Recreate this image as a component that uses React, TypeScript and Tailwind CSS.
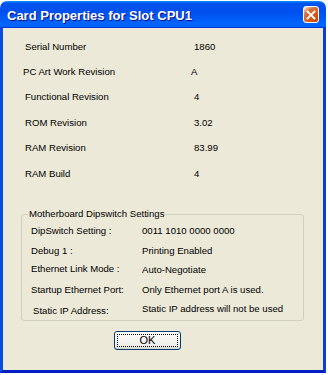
import React from "react";

const topRows = [
  { label: "Serial Number", value: "1860", lc: "ml-[22px] w-[169px]" },
  { label: "PC Art Work Revision", value: "A", lc: "ml-[20px] w-[168px]" },
  { label: "Functional Revision", value: "4", lc: "ml-[22px] w-[169px]" },
  { label: "ROM Revision", value: "3.02", lc: "ml-[22px] w-[169px]" },
  { label: "RAM Revision", value: "83.99", lc: "ml-[22px] w-[169px]" },
  { label: "RAM Build", value: "4", lc: "ml-[22px] w-[169px]" },
];

const groupRows = [
  { label: "DipSwitch Setting :", value: "0011 1010 0000 0000", lc: "ml-[9px] w-[111px]", ls: "" },
  { label: "Debug 1 :", value: "Printing Enabled", lc: "ml-[9px] w-[111px]", ls: "" },
  { label: "Ethernet Link Mode :", value: "Auto-Negotiate", lc: "ml-[9px] w-[111px]", ls: "-mt-[2px]" },
  { label: "Startup Ethernet Port:", value: "Only Ethernet port A is used.", lc: "ml-[9px] w-[111px]", ls: "" },
  { label: "Static IP Address:", value: "Static IP address will not be used", lc: "ml-[11px] w-[109px]", ls: "mt-[3px]" },
];

export default function App() {
  return (
    <div className="w-[328px] h-[375px] bg-white pt-[1px] font-['Liberation_Sans',Arial,sans-serif] text-black">
      <div className="w-[326px] h-[372px] flex flex-col rounded-t-[7px] overflow-hidden">
        {/* Title bar */}
        <div className="h-[27px] shrink-0 flex items-start justify-between bg-[linear-gradient(180deg,#0997ff,#0053ee_8%,#0050ee_40%,#0066ff_88%,#0066ff_93%,#005bff_95%,#003dd7_96%,#003dd7)]">
          <div className="pl-[7px] pt-[6px] text-[13px] leading-[17px] font-bold text-white [text-shadow:1px_1px_#0f1089]">
            Card Properties for Slot CPU1
          </div>
          <div className="mt-[5px] mr-[7px] w-[16px] h-[17px] rounded-[3px] border border-white bg-[radial-gradient(circle_at_90%_90%,#cc4600_0,#dc6527_55%,#cd7546_70%,#ffccb2_90%,#fff_100%)] flex items-center justify-center">
            <svg width="10" height="10" viewBox="0 0 10 10">
              <path d="M1.5 1.5 L8.5 8.5 M8.5 1.5 L1.5 8.5" stroke="white" strokeWidth="1.8" strokeLinecap="square" />
            </svg>
          </div>
        </div>
        {/* Body */}
        <div className="flex-1 flex flex-col bg-[#ece9d8] border-l-[3px] border-r-[3px] border-b-[3px] border-l-[#0a4be0] border-r-[#0a3ed6] border-b-[#001fc4] text-[9.6px] leading-[12px]">
          <div className="pt-[6px] flex flex-col">
            {topRows.map((r) => (
              <div key={r.label} className="h-[25.4px] flex items-center">
                <span className={r.lc}>{r.label}</span>
                <span>{r.value}</span>
              </div>
            ))}
          </div>
          <div className="relative mt-[28px] ml-[18px] w-[283px] h-[107px] border border-[#d0d0bf] rounded-[3px] pt-[6px] flex flex-col">
            <span className="absolute left-[6px] -top-[7px] px-[1px] bg-[#ece9d8]">Motherboard Dipswitch Settings</span>
            {groupRows.map((r) => (
              <div key={r.label} className="h-[19.5px] flex items-center">
                <span className={r.lc + " " + r.ls}>{r.label}</span>
                <span>{r.value}</span>
              </div>
            ))}
          </div>
          <div className="mt-[10px] ml-[111px] w-[67px] h-[19px] rounded-[3px] border border-[#003c74] bg-[linear-gradient(180deg,#fff,#ecebe6_86%,#d6d0c5)] p-[2px]">
            <div className="w-full h-full border border-dotted border-black flex items-center justify-center text-[11px] leading-[11px]">
              OK
            </div>
          </div>
        </div>
      </div>
    </div>
  );
}
